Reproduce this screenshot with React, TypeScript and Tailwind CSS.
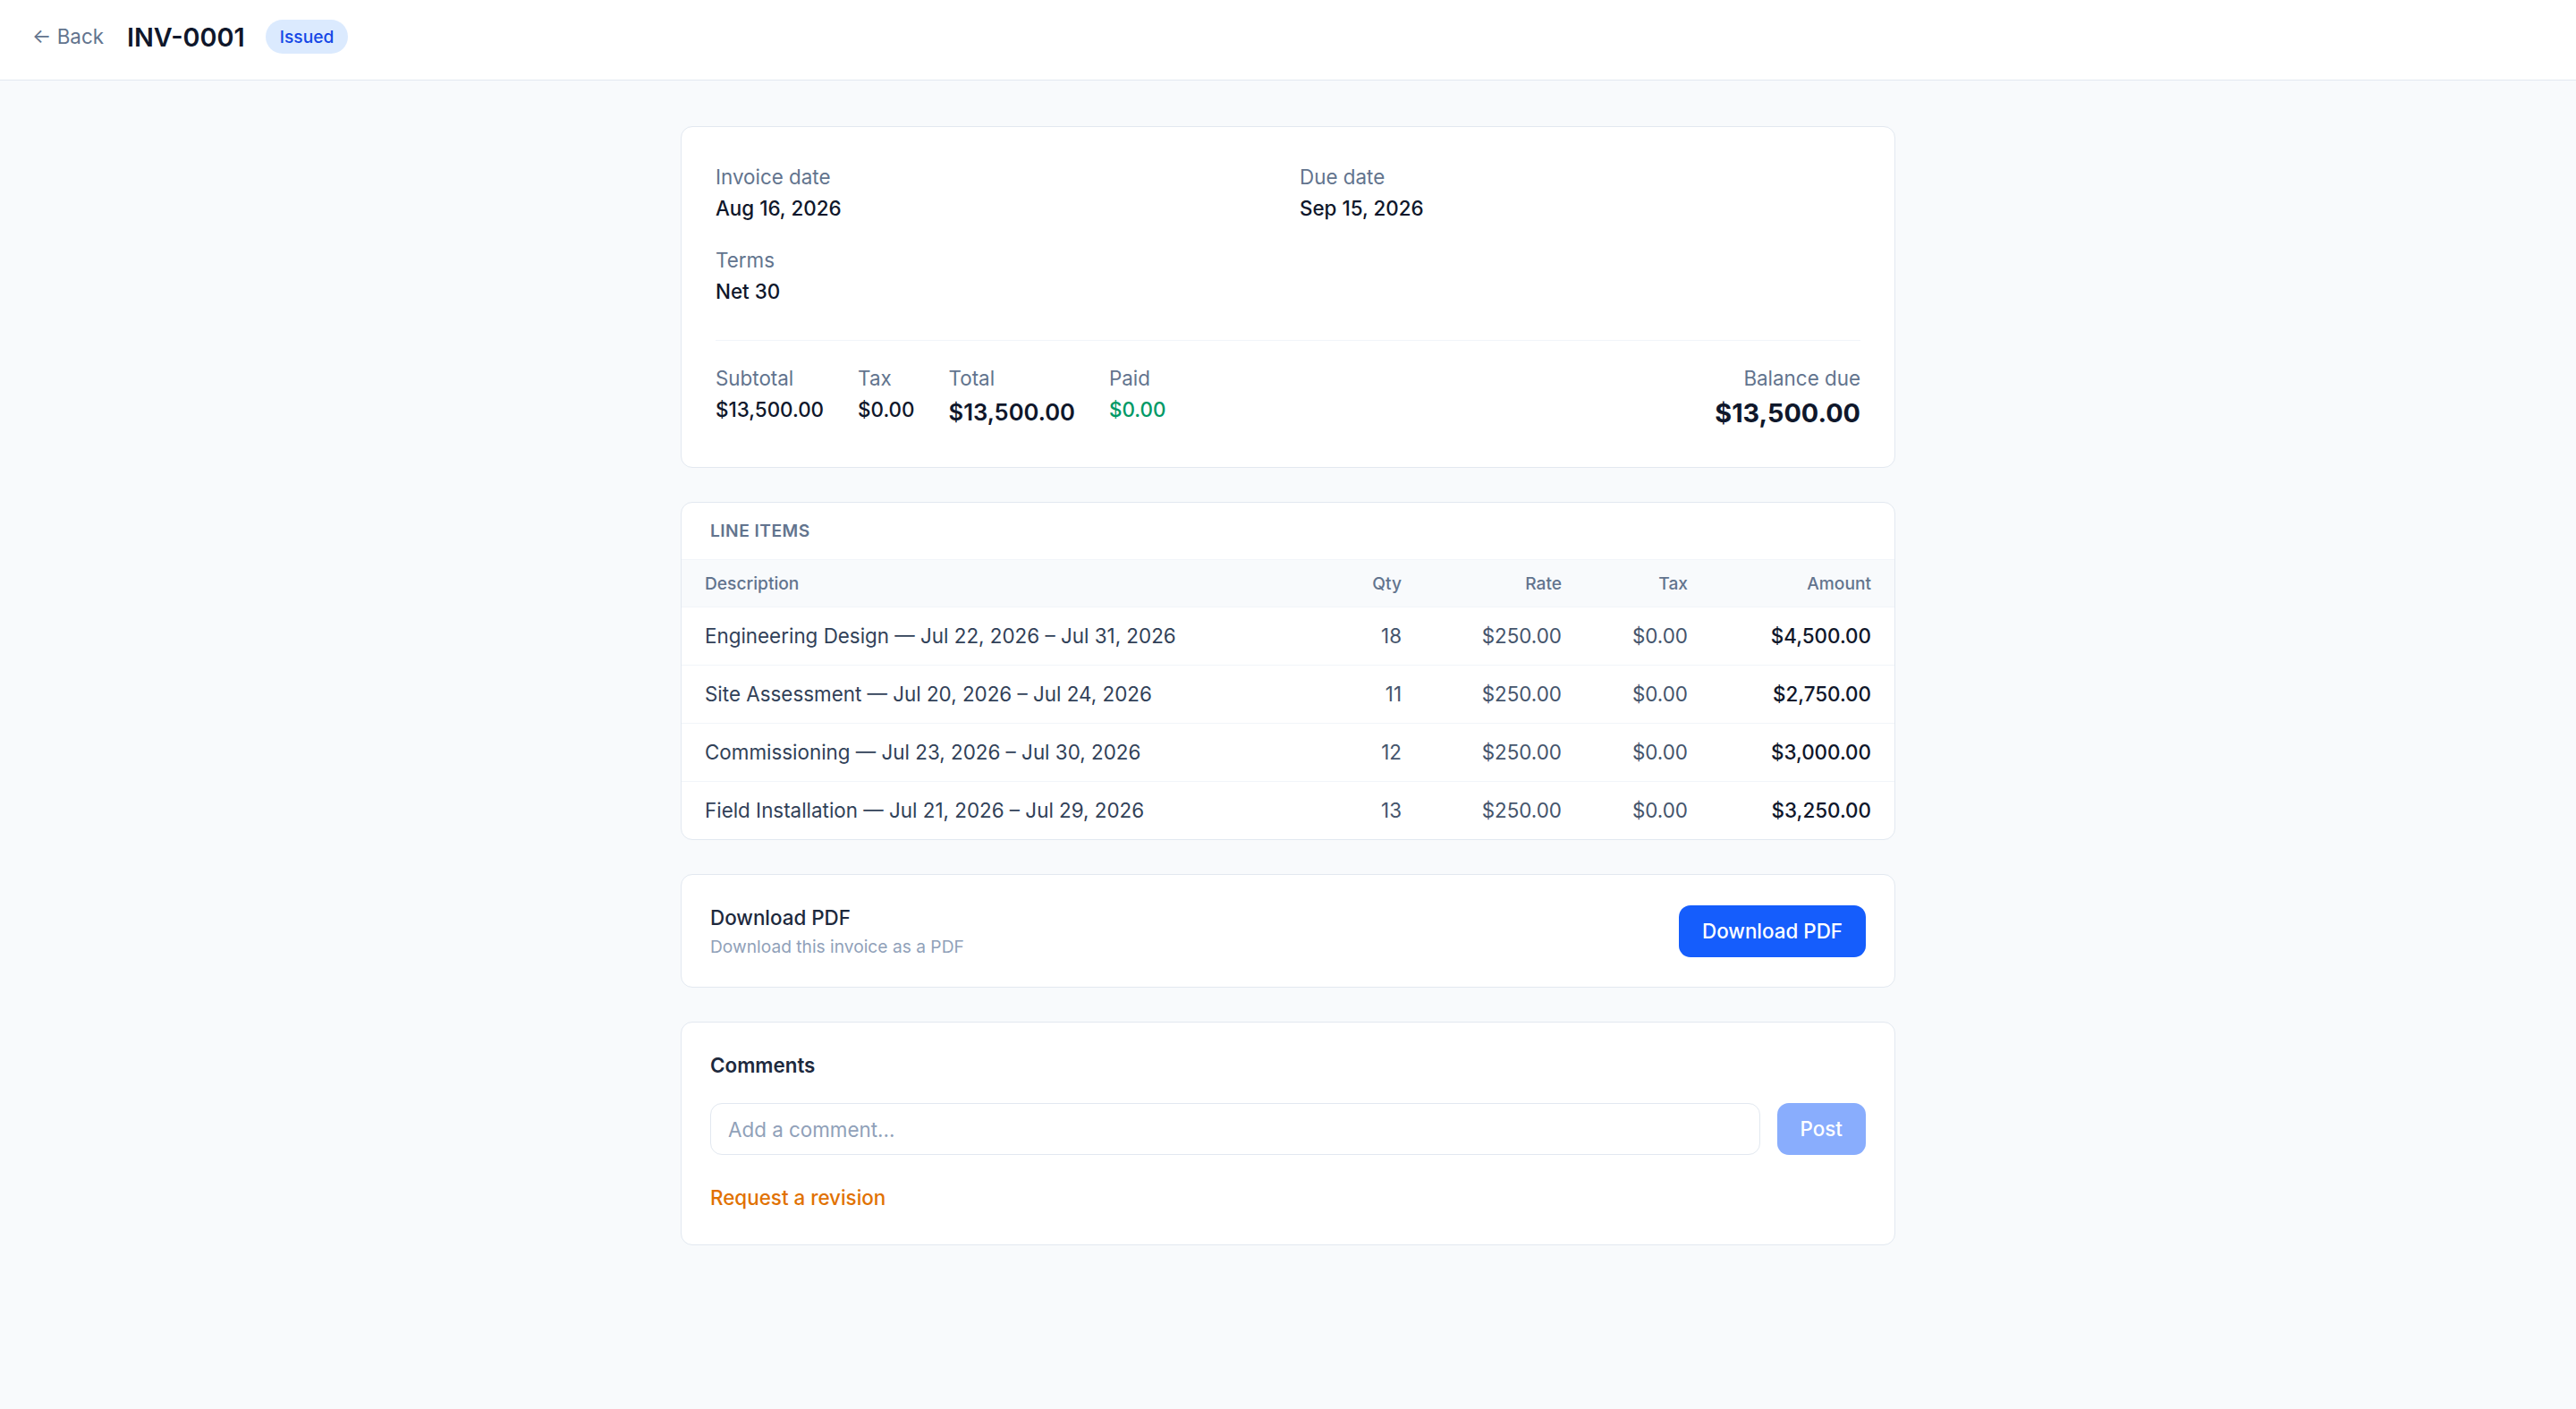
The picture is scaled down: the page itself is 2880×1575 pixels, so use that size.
import { useState } from "react";

const LINE_ITEMS = [
  { description: "Engineering Design — Jul 22, 2026 – Jul 31, 2026", qty: 18, rate: "$250.00", tax: "$0.00", amount: "$4,500.00" },
  { description: "Site Assessment — Jul 20, 2026 – Jul 24, 2026", qty: 11, rate: "$250.00", tax: "$0.00", amount: "$2,750.00" },
  { description: "Commissioning — Jul 23, 2026 – Jul 30, 2026", qty: 12, rate: "$250.00", tax: "$0.00", amount: "$3,000.00" },
  { description: "Field Installation — Jul 21, 2026 – Jul 29, 2026", qty: 13, rate: "$250.00", tax: "$0.00", amount: "$3,250.00" },
];

const COLS = "grid grid-cols-[1fr_128px_179px_141px_205px]";

const Stat = ({
  label,
  value,
  valueClass = "text-[22.4px] leading-8 font-medium",
}: {
  label: string;
  value: string;
  valueClass?: string;
}) => (
  <div>
    <div className="text-[22.4px] leading-8 text-slate-500">{label}</div>
    <div className={`mt-[3px] ${valueClass}`}>{value}</div>
  </div>
);

export default function App() {
  const [comment, setComment] = useState("");

  return (
    <div className="min-h-screen bg-slate-50 font-['Inter',sans-serif] text-slate-900">
      {/* Top bar */}
      <header className="flex h-[90px] items-center gap-[26px] border-b border-slate-200 bg-white px-[36px] pb-[7px]">
        <button className="text-[22.4px] leading-8 text-slate-500 hover:text-slate-700">← Back</button>
        <div className="flex items-center gap-[23px]">
          <h1 className="text-[28.8px] leading-[45px] font-semibold text-slate-900">INV-0001</h1>
          <span className="rounded-full bg-blue-100 px-4 py-1.5 text-[19.2px] leading-[26px] font-medium text-blue-700">
            Issued
          </span>
        </div>
      </header>

      <main className="mx-auto max-w-[1434px] space-y-[38px] px-[38px] py-[51px]">
        {/* Summary */}
        <section className="rounded-[13px] border border-slate-200 bg-white px-[38px] pt-[40px] pb-[38px]">
          <div className="grid grid-cols-2 gap-[26px]">
            <Stat label="Invoice date" value="Aug 16, 2026" />
            <Stat label="Due date" value="Sep 15, 2026" />
            <Stat label="Terms" value="Net 30" />
          </div>

          <div className="mt-[38px] flex items-start justify-between border-t border-slate-100 pt-[26px]">
            <div className="flex gap-[38px]">
              <Stat label="Subtotal" value="$13,500.00" />
              <Stat label="Tax" value="$0.00" />
              <Stat label="Total" value="$13,500.00" valueClass="text-[25.6px] leading-[38px] font-semibold" />
              <Stat label="Paid" value="$0.00" valueClass="text-[22.4px] leading-8 font-medium text-emerald-600" />
            </div>
            <div className="text-right">
              <div className="text-[22.4px] leading-8 text-slate-500">Balance due</div>
              <div className="text-[28.8px] leading-[45px] font-bold">$13,500.00</div>
            </div>
          </div>
        </section>

        {/* Line items */}
        <section className="overflow-hidden rounded-[13px] border border-slate-200 bg-white">
          <h2 className="px-8 pt-[18px] pb-[19px] text-[19.2px] leading-[26px] font-semibold uppercase tracking-wide text-slate-500">
            Line items
          </h2>
          <div className={`${COLS} border-y border-slate-100 bg-slate-50 py-[13px] text-[19.2px] leading-[26px] font-medium text-slate-500`}>
            <div className="px-[26px]">Description</div>
            <div className="px-[26px] text-right">Qty</div>
            <div className="px-[26px] text-right">Rate</div>
            <div className="px-[26px] text-right">Tax</div>
            <div className="px-[26px] text-right">Amount</div>
          </div>
          <div className="divide-y divide-slate-100">
            {LINE_ITEMS.map((item) => (
              <div key={item.description} className={`${COLS} py-4 text-[22.4px] leading-8`}>
                <div className="px-[26px] text-slate-700">{item.description}</div>
                <div className="px-[26px] text-right text-slate-600">{item.qty}</div>
                <div className="px-[26px] text-right text-slate-600">{item.rate}</div>
                <div className="px-[26px] text-right text-slate-600">{item.tax}</div>
                <div className="px-[26px] text-right font-medium text-slate-900">{item.amount}</div>
              </div>
            ))}
          </div>
        </section>

        {/* Download */}
        <section className="flex items-center justify-between rounded-[13px] border border-slate-200 bg-white p-8">
          <div>
            <div className="text-[22.4px] leading-8 font-medium text-slate-800">Download PDF</div>
            <div className="mt-[3px] text-[19.2px] leading-[26px] text-slate-400">Download this invoice as a PDF</div>
          </div>
          <button className="rounded-[13px] bg-blue-600 px-[26px] py-[13px] text-[22.4px] leading-8 font-medium text-white hover:bg-blue-700">
            Download PDF
          </button>
        </section>

        {/* Comments */}
        <section className="rounded-[13px] border border-slate-200 bg-white px-8 pt-8 pb-[36px]">
          <h3 className="text-[22.4px] leading-8 font-semibold text-slate-800">Comments</h3>
          <div className="mt-[26px] flex gap-[19px]">
            <input
              value={comment}
              onChange={(e) => setComment(e.target.value)}
              placeholder="Add a comment..."
              className="h-[58px] flex-1 rounded-[13px] border border-slate-200 px-[19px] text-[22.4px] text-slate-900 outline-none placeholder:text-slate-400"
            />
            <button
              disabled={!comment.trim()}
              className="h-[58px] rounded-[13px] bg-blue-600 px-[26px] text-[22.4px] font-medium text-white disabled:opacity-50"
            >
              Post
            </button>
          </div>
          <button className="mt-8 block text-[22.4px] leading-8 font-medium text-amber-600 hover:text-amber-700">
            Request a revision
          </button>
        </section>
      </main>
    </div>
  );
}
